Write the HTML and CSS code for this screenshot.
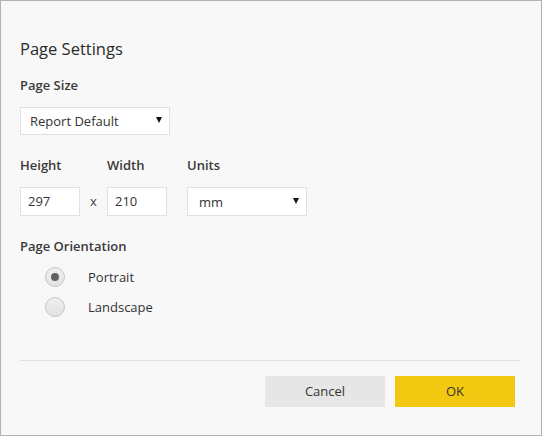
FILE: index.html
```html
<!DOCTYPE html>
<html>
<head>
<meta charset="utf-8">
<link rel="stylesheet" href="styles.css">
</head>
<body>
<div class="dialog">
  <div class="title">Page Settings</div>
  <div class="label first">Page Size</div>
  <div class="select size-select"><span>Report Default</span><span class="arrow"></span></div>
  <div class="dims">
    <div class="field">
      <div class="label">Height</div>
      <div class="input">297</div>
    </div>
    <div class="times">x</div>
    <div class="field">
      <div class="label">Width</div>
      <div class="input">210</div>
    </div>
    <div class="field units">
      <div class="label">Units</div>
      <div class="select unit-select"><span>mm</span><span class="arrow"></span></div>
    </div>
  </div>
  <div class="label orient">Page Orientation</div>
  <div class="radios">
    <div class="radio-row"><span class="radio checked"></span><span class="radio-text">Portrait</span></div>
    <div class="radio-row"><span class="radio"></span><span class="radio-text">Landscape</span></div>
  </div>
  <div class="sep"></div>
  <div class="footer">
    <div class="btn cancel">Cancel</div>
    <div class="btn ok">OK</div>
  </div>
</div>
</body>
</html>
```
FILE: styles.css
```css
html, body { margin: 0; padding: 0; }
body { font-family: "Open Sans", "Noto Sans", sans-serif; color: #333; }
.dialog {
  width: 542px; height: 436px; box-sizing: border-box;
  border: 1px solid #b3b3b3; background: #f8f8f8;
  padding: 0 21px 0 19px;
  display: flex; flex-direction: column;
}
.title { margin-top: 35px; font-size: 16.5px; line-height: 25px; color: #2b2b2b; }
.label { font-size: 13px; line-height: 18px; font-weight: 600; color: #3a3a3a; }
.label.first { margin-top: 15px; }
.select {
  box-sizing: border-box; height: 28px; background: #fff; border: 1px solid #e1e1e1;
  display: flex; align-items: center; justify-content: space-between;
  padding: 0 7px 0 9px; font-size: 13px;
}
.size-select { width: 150px; margin-top: 13px; }
.arrow {
  width: 0; height: 0; border-left: 3px solid transparent; border-right: 3px solid transparent;
  border-top: 6px solid #111; margin-top: -2px;
}
.dims { display: flex; margin-top: 21px; align-items: flex-end; }
.field { display: flex; flex-direction: column; gap: 13px; }
.input {
  box-sizing: border-box; width: 60px; height: 29px; background: #fff; border: 1px solid #e1e1e1;
  font-size: 13px; line-height: 27px; padding-left: 7px;
}
.times { width: 27px; text-align: center; font-size: 13px; line-height: 29px; color: #444; }
.units { margin-left: 20px; }
.unit-select { width: 120px; height: 29px; padding-left: 11px; }
.orient { margin-top: 21px; }
.radios { margin-top: 7px; display: flex; flex-direction: column; padding-left: 25px; }
.radio-row { height: 30px; display: flex; align-items: center; }
.radio {
  box-sizing: border-box; width: 20px; height: 20px; border-radius: 50%;
  border: 1px solid #c6c6c6; background: linear-gradient(#efefef, #e2e2e2);
  display: flex; align-items: center; justify-content: center;
}
.radio.checked::after { content: ""; width: 8px; height: 8px; border-radius: 50%; background: #606060; }
.radio-text { margin-left: 23px; font-size: 13px; }
.sep { margin-top: 38px; height: 1px; background: #e0e0e0; }
.footer { margin-top: 15px; display: flex; justify-content: flex-end; gap: 10px; padding-right: 5px; }
.btn { width: 120px; height: 31px; font-size: 13px; line-height: 31px; text-align: center; color: #333; }
.cancel { background: #e6e6e6; }
.ok { background: #f2c811; }
```
